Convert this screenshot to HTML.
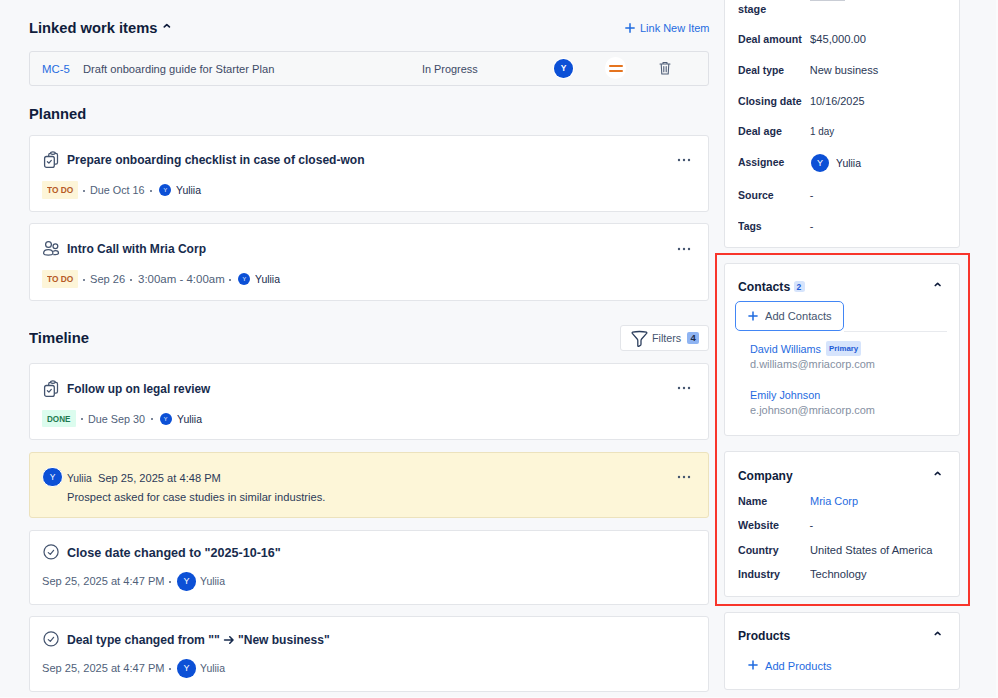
<!DOCTYPE html><html><head><meta charset="utf-8"><style>
*{margin:0;padding:0;box-sizing:border-box}
html,body{width:998px;height:698px;overflow:hidden;background:#f7f8fa}
body{position:relative;font-family:"Liberation Sans",sans-serif}
.t{position:absolute;line-height:1;white-space:nowrap;transform-origin:0 0}
.a{position:absolute}
</style></head><body><!-- left column boxes -->
<svg class="a" style="left:156px;top:16px" width="24" height="20" viewBox="0 0 24 20"><path d="M8.3 10.9 L10.8 8.7 L13.4 10.9" fill="none" stroke="#101d3c" stroke-width="1.7" stroke-linecap="round" stroke-linejoin="round"/></svg>
<svg class="a" style="left:624px;top:22px" width="12" height="12" viewBox="0 0 12 12"><path d="M6 1.3 V10.7 M1.3 6 H10.7" stroke="#1f6be0" stroke-width="1.5"/></svg>
<div class="a" style="left:29px;top:51px;width:680px;height:35px;border:1px solid #dfe1e6;border-radius:3px;background:#f7f8f9"></div>
<div class="a" style="left:554.2px;top:59.1px;width:18.6px;height:18.6px;border-radius:50%;background:#0c50d6;box-shadow:0 0 0 1px #fff;color:#fff;font-size:8.5px;font-weight:700;line-height:18.6px;text-align:center">Y</div>
<div class="a" style="left:604.8px;top:57.4px;width:21.6px;height:21.6px;border-radius:50%;background:#fff"></div>
<div class="a" style="left:609px;top:64.8px;width:14px;height:2px;background:#e5741f;border-radius:1px"></div>
<div class="a" style="left:609px;top:69.9px;width:14px;height:2px;background:#e5741f;border-radius:1px"></div>
<svg class="a" style="left:657px;top:60px" width="16" height="16" viewBox="0 0 16 16"><path d="M3 4 H13 M6 4 V2.5 H10 V4 M4.2 4 L4.8 14 H11.2 L11.8 4 M6.8 6.5 V11.8 M9.2 6.5 V11.8" fill="none" stroke="#505f79" stroke-width="1.1" stroke-linejoin="round" stroke-linecap="round"/></svg>

<!-- card1 -->
<div class="a" style="left:29px;top:135px;width:680px;height:77px;border:1px solid #e3e5e9;border-radius:3px;background:#fff"></div>
<svg class="a" style="left:36px;top:145px" width="30" height="30" viewBox="0 0 30 30"><path d="M12.7 11.3 V10 Q12.7 8.4 14.3 8.4 H19.9 Q21.5 8.4 21.5 10 V17.6 Q21.5 19.2 19.9 19.2 H18.4" fill="none" stroke="#44546f" stroke-width="1.25"/><ellipse cx="16.9" cy="8.1" rx="2.3" ry="1.3" fill="#fff" stroke="#44546f" stroke-width="1.2"/><rect x="8.6" y="11.5" width="9.7" height="10.8" rx="1.9" fill="#fff" stroke="#44546f" stroke-width="1.3"/><path d="M11.4 16.7 L12.9 18.1 L15.3 15.4" fill="none" stroke="#44546f" stroke-width="1.25" stroke-linecap="round" stroke-linejoin="round"/></svg>
<svg class="a" style="left:676px;top:157px" width="16" height="6" viewBox="0 0 16 6"><circle cx="3" cy="3" r="1.2" fill="#44546f"/><circle cx="8" cy="3" r="1.2" fill="#44546f"/><circle cx="13" cy="3" r="1.2" fill="#44546f"/></svg>
<div class="a" style="left:42px;top:181px;width:36px;height:17.6px;background:#fdf5d8;border-radius:1px"></div>
<div class="a" style="left:159.4px;top:183.5px;width:12px;height:12px;border-radius:50%;background:#0c50d6;color:#fff;font-size:5.5px;line-height:12px;text-align:center">Y</div>

<!-- card2 -->
<div class="a" style="left:29px;top:223px;width:680px;height:78px;border:1px solid #e3e5e9;border-radius:3px;background:#fff"></div>
<svg class="a" style="left:36px;top:234px" width="30" height="30" viewBox="0 0 30 30"><circle cx="12.5" cy="10.5" r="2.9" fill="none" stroke="#44546f" stroke-width="1.25"/><circle cx="19.4" cy="12.3" r="2.4" fill="none" stroke="#44546f" stroke-width="1.25"/><path d="M7.6 19.3 Q7.6 15.5 12.3 15.5 Q16.9 15.5 16.9 19.3 Q16.9 21.1 12.3 21.1 Q7.6 21.1 7.6 19.3 Z" fill="none" stroke="#44546f" stroke-width="1.25"/><path d="M17.2 17.4 Q18.2 16.6 19.6 16.6 Q22.5 16.6 22.5 19 Q22.5 20.5 19.6 20.5 H17.3" fill="none" stroke="#44546f" stroke-width="1.25"/></svg>
<svg class="a" style="left:676px;top:246px" width="16" height="6" viewBox="0 0 16 6"><circle cx="3" cy="3" r="1.2" fill="#44546f"/><circle cx="8" cy="3" r="1.2" fill="#44546f"/><circle cx="13" cy="3" r="1.2" fill="#44546f"/></svg>
<div class="a" style="left:41.6px;top:270px;width:36.6px;height:18px;background:#fdf5d8;border-radius:1px"></div>
<div class="a" style="left:238.3px;top:272.8px;width:12px;height:12px;border-radius:50%;background:#0c50d6;color:#fff;font-size:5.5px;line-height:12px;text-align:center">Y</div>

<!-- filters -->
<div class="a" style="left:620px;top:325px;width:89px;height:26px;border:1px solid #e3e5e9;border-radius:3px;background:#fff"></div>
<svg class="a" style="left:629.5px;top:329.5px" width="19" height="18" viewBox="0 0 19 18"><path d="M2.5 2.2 Q9.5 0.8 16.5 2.2 Q17.2 2.6 16.6 3.4 L11.6 9 Q11 9.7 11 10.8 V14.3 Q11 15.2 10 15.6 L8.6 16.3 Q7.8 16.6 7.8 15.6 V10.8 Q7.8 9.7 7.2 9 L2.3 3.4 Q1.8 2.6 2.5 2.2 Z" fill="none" stroke="#2c3e5d" stroke-width="1.3" stroke-linejoin="round"/></svg>
<div class="a" style="left:687.2px;top:332px;width:11.6px;height:12px;background:#8fb4f2;border-radius:2px"></div>

<!-- card3 -->
<div class="a" style="left:29px;top:363px;width:680px;height:77px;border:1px solid #e3e5e9;border-radius:3px;background:#fff"></div>
<svg class="a" style="left:36px;top:374px" width="30" height="30" viewBox="0 0 30 30"><path d="M12.7 11.3 V10 Q12.7 8.4 14.3 8.4 H19.9 Q21.5 8.4 21.5 10 V17.6 Q21.5 19.2 19.9 19.2 H18.4" fill="none" stroke="#44546f" stroke-width="1.25"/><ellipse cx="16.9" cy="8.1" rx="2.3" ry="1.3" fill="#fff" stroke="#44546f" stroke-width="1.2"/><rect x="8.6" y="11.5" width="9.7" height="10.8" rx="1.9" fill="#fff" stroke="#44546f" stroke-width="1.3"/><path d="M11.4 16.7 L12.9 18.1 L15.3 15.4" fill="none" stroke="#44546f" stroke-width="1.25" stroke-linecap="round" stroke-linejoin="round"/></svg>
<svg class="a" style="left:676px;top:385px" width="16" height="6" viewBox="0 0 16 6"><circle cx="3" cy="3" r="1.2" fill="#44546f"/><circle cx="8" cy="3" r="1.2" fill="#44546f"/><circle cx="13" cy="3" r="1.2" fill="#44546f"/></svg>
<div class="a" style="left:41.6px;top:409.6px;width:34.1px;height:17px;background:#dcfcee;border-radius:1px"></div>
<div class="a" style="left:159.7px;top:412.5px;width:12px;height:12px;border-radius:50%;background:#0c50d6;color:#fff;font-size:5.5px;line-height:12px;text-align:center">Y</div>

<!-- note -->
<div class="a" style="left:29px;top:452px;width:680px;height:66px;border:1px solid #ece2bd;border-radius:3px;background:#fdf6d8"></div>
<div class="a" style="left:42.3px;top:466.8px;width:20.4px;height:20.4px;border-radius:50%;background:#0c50d6;border:1px solid #fff;color:#fff;font-size:8.5px;font-weight:400;line-height:18.4px;text-align:center">Y</div>
<svg class="a" style="left:676px;top:474px" width="16" height="6" viewBox="0 0 16 6"><circle cx="3" cy="3" r="1.2" fill="#44546f"/><circle cx="8" cy="3" r="1.2" fill="#44546f"/><circle cx="13" cy="3" r="1.2" fill="#44546f"/></svg>

<!-- card4 -->
<div class="a" style="left:29px;top:530px;width:680px;height:75px;border:1px solid #e3e5e9;border-radius:3px;background:#fff"></div>
<svg class="a" style="left:42px;top:544px" width="17" height="17" viewBox="0 0 17 17"><circle cx="9.05" cy="7.9" r="7.05" fill="none" stroke="#44546f" stroke-width="1.2"/><path d="M6.3 8.6 L8.3 10.4 L11.6 6.3" fill="none" stroke="#44546f" stroke-width="1.2" stroke-linecap="round" stroke-linejoin="round"/></svg>
<div class="a" style="left:177.3px;top:572px;width:18.5px;height:18.5px;border-radius:50%;background:#0c50d6;color:#fff;font-size:9px;font-weight:400;line-height:18.5px;text-align:center">Y</div>

<!-- card5 -->
<div class="a" style="left:29px;top:616px;width:680px;height:76px;border:1px solid #e3e5e9;border-radius:3px;background:#fff"></div>
<svg class="a" style="left:42px;top:631.4px" width="17" height="17" viewBox="0 0 17 17"><circle cx="9.05" cy="7.9" r="7.05" fill="none" stroke="#44546f" stroke-width="1.2"/><path d="M6.3 8.6 L8.3 10.4 L11.6 6.3" fill="none" stroke="#44546f" stroke-width="1.2" stroke-linecap="round" stroke-linejoin="round"/></svg>
<div class="a" style="left:177.3px;top:659px;width:18.5px;height:18.5px;border-radius:50%;background:#0c50d6;color:#fff;font-size:9px;font-weight:400;line-height:18.5px;text-align:center">Y</div>

<!-- right column -->
<div class="a" style="left:724px;top:-10px;width:236px;height:258px;border:1px solid #e3e5e9;border-radius:3px;background:#fff"></div>
<div class="a" style="left:810px;top:0px;width:35px;height:1px;background:#c9cdd5"></div>
<div class="a" style="left:810.7px;top:153.8px;width:18.5px;height:18.5px;border-radius:50%;background:#0c50d6;color:#fff;font-size:9px;font-weight:400;line-height:18.5px;text-align:center">Y</div>

<div class="a" style="left:715px;top:253px;width:254.5px;height:352.5px;border:2px solid #f8352b"></div>

<div class="a" style="left:724px;top:263px;width:236px;height:173px;border:1px solid #e3e5e9;border-radius:3px;background:#fff"></div>
<div class="a" style="left:793.7px;top:280.8px;width:11.3px;height:11.6px;background:#d6e4fc;border-radius:2.5px"></div>
<svg class="a" style="left:926px;top:274px" width="24" height="20" viewBox="0 0 24 20"><path d="M9.3 11.5 L11.65 9.3 L14 11.5" fill="none" stroke="#101d3c" stroke-width="1.7" stroke-linecap="round" stroke-linejoin="round"/></svg>
<div class="a" style="left:734.9px;top:301.3px;width:108.7px;height:29.3px;border:1.8px solid #4286f5;border-radius:5px;background:#fff"></div>
<svg class="a" style="left:746.8px;top:310px" width="12" height="12" viewBox="0 0 12 12"><path d="M6 1.4 V10.6 M1.4 6 H10.6" stroke="#1f6be0" stroke-width="1.5"/></svg>
<div class="a" style="left:843.6px;top:331px;width:103px;height:1px;background:#e8eaee"></div>
<div class="a" style="left:826px;top:341.1px;width:35.3px;height:14.5px;background:#d6e4fc;border-radius:2px"></div>

<div class="a" style="left:724px;top:451px;width:236px;height:146px;border:1px solid #e3e5e9;border-radius:3px;background:#fff"></div>
<svg class="a" style="left:926px;top:463px" width="24" height="20" viewBox="0 0 24 20"><path d="M9.3 11.5 L11.65 9.3 L14 11.5" fill="none" stroke="#101d3c" stroke-width="1.7" stroke-linecap="round" stroke-linejoin="round"/></svg>

<div class="a" style="left:724px;top:612px;width:236px;height:78px;border:1px solid #e3e5e9;border-radius:3px;background:#fff"></div>
<svg class="a" style="left:926px;top:623px" width="24" height="20" viewBox="0 0 24 20"><path d="M9.3 11.5 L11.65 9.3 L14 11.5" fill="none" stroke="#101d3c" stroke-width="1.7" stroke-linecap="round" stroke-linejoin="round"/></svg>
<svg class="a" style="left:747px;top:659px" width="12" height="12" viewBox="0 0 12 12"><path d="M6 1.4 V10.6 M1.4 6 H10.6" stroke="#1f6be0" stroke-width="1.5"/></svg>
<div class="a" style="left:996px;top:0;width:2px;height:698px;background:#fbfbfc"></div>
<div class="a" style="left:0;top:697px;width:998px;height:1px;background:#fbfbfc"></div>
<svg class="a" style="left:222px;top:634px" width="14" height="12" viewBox="0 0 14 12"><path d="M2.6 6 H11 M7.8 2.8 L11 6 L7.8 9.2" fill="none" stroke="#172b4d" stroke-width="1.6" stroke-linecap="round" stroke-linejoin="round"/></svg>
<div class="a" style="left:82.90px;top:189.60px;width:2.2px;height:2.2px;border-radius:50%;background:#505f79"></div><div class="a" style="left:150.20px;top:189.60px;width:2.2px;height:2.2px;border-radius:50%;background:#505f79"></div><div class="a" style="left:82.80px;top:278.80px;width:2.2px;height:2.2px;border-radius:50%;background:#505f79"></div><div class="a" style="left:130.30px;top:278.80px;width:2.2px;height:2.2px;border-radius:50%;background:#505f79"></div><div class="a" style="left:228.90px;top:278.80px;width:2.2px;height:2.2px;border-radius:50%;background:#505f79"></div><div class="a" style="left:80.80px;top:418.10px;width:2.2px;height:2.2px;border-radius:50%;background:#505f79"></div><div class="a" style="left:150.90px;top:418.10px;width:2.2px;height:2.2px;border-radius:50%;background:#505f79"></div><div class="a" style="left:169.20px;top:580.70px;width:2.2px;height:2.2px;border-radius:50%;background:#505f79"></div><div class="a" style="left:169.20px;top:667.80px;width:2.2px;height:2.2px;border-radius:50%;background:#505f79"></div><div class="t" style="left:29.00px;top:19.78px;font-size:15.5px;font-weight:700;color:#101d3c;transform:scaleX(0.9495)">Linked work items</div>
<div class="t" style="left:639.80px;top:22.99px;font-size:11px;font-weight:400;color:#1f6be0;transform:scaleX(0.9971)">Link New Item</div>
<div class="t" style="left:41.90px;top:63.99px;font-size:11px;font-weight:400;color:#1f6be0;transform:scaleX(1.0338)">MC-5</div>
<div class="t" style="left:83.00px;top:64.09px;font-size:11px;font-weight:400;color:#3d4a66;transform:scaleX(1.0129)">Draft onboarding guide for Starter Plan</div>
<div class="t" style="left:422.40px;top:64.09px;font-size:11px;font-weight:400;color:#3d4a66;transform:scaleX(0.9884)">In Progress</div>
<div class="t" style="left:29.10px;top:105.78px;font-size:15.5px;font-weight:700;color:#101d3c;transform:scaleX(0.9486)">Planned</div>
<div class="t" style="left:67.00px;top:154.24px;font-size:12px;font-weight:700;color:#172b4d;transform:scaleX(1.0025)">Prepare onboarding checklist in case of closed-won</div>
<div class="t" style="left:47.00px;top:185.60px;font-size:8.5px;font-weight:700;color:#b55a26;transform:scaleX(0.9826)">TO DO</div>
<div class="t" style="left:90.40px;top:185.29px;font-size:11px;font-weight:400;color:#505f79;transform:scaleX(0.9813)">Due Oct 16</div>
<div class="t" style="left:176.00px;top:185.29px;font-size:11px;font-weight:400;color:#172b4d;transform:scaleX(0.9507)">Yuliia</div>
<div class="t" style="left:67.00px;top:243.34px;font-size:12px;font-weight:700;color:#172b4d;transform:scaleX(1.0024)">Intro Call with Mria Corp</div>
<div class="t" style="left:47.00px;top:274.60px;font-size:8.5px;font-weight:700;color:#b55a26;transform:scaleX(0.9826)">TO DO</div>
<div class="t" style="left:90.00px;top:274.49px;font-size:11px;font-weight:400;color:#505f79;transform:scaleX(1.0093)">Sep 26</div>
<div class="t" style="left:137.60px;top:274.49px;font-size:11px;font-weight:400;color:#505f79;transform:scaleX(1.0426)">3:00am - 4:00am</div>
<div class="t" style="left:255.00px;top:274.49px;font-size:11px;font-weight:400;color:#172b4d;transform:scaleX(0.9507)">Yuliia</div>
<div class="t" style="left:29.00px;top:330.48px;font-size:15.5px;font-weight:700;color:#101d3c;transform:scaleX(0.9583)">Timeline</div>
<div class="t" style="left:651.70px;top:333.49px;font-size:11px;font-weight:400;color:#44546f;transform:scaleX(0.9749)">Filters</div>
<div class="t" style="left:690.50px;top:332.86px;font-size:9.5px;font-weight:700;color:#1b2a4a">4</div>
<div class="t" style="left:66.70px;top:382.64px;font-size:12px;font-weight:700;color:#172b4d;transform:scaleX(0.9858)">Follow up on legal review</div>
<div class="t" style="left:47.00px;top:414.90px;font-size:8.5px;font-weight:700;color:#1e7a50;transform:scaleX(0.9527)">DONE</div>
<div class="t" style="left:88.00px;top:413.99px;font-size:11px;font-weight:400;color:#505f79;transform:scaleX(0.9809)">Due Sep 30</div>
<div class="t" style="left:176.70px;top:413.99px;font-size:11px;font-weight:400;color:#172b4d;transform:scaleX(0.9507)">Yuliia</div>
<div class="t" style="left:66.90px;top:472.59px;font-size:11px;font-weight:400;color:#2c3a58;transform:scaleX(0.9393)">Yuliia</div>
<div class="t" style="left:98.40px;top:472.59px;font-size:11px;font-weight:400;color:#2c3a58;transform:scaleX(1.0090)">Sep 25, 2025 at 4:48 PM</div>
<div class="t" style="left:66.90px;top:492.39px;font-size:11px;font-weight:400;color:#2c3a58;transform:scaleX(1.0107)">Prospect asked for case studies in similar industries.</div>
<div class="t" style="left:66.70px;top:547.04px;font-size:12px;font-weight:700;color:#172b4d;transform:scaleX(1.0474)">Close date changed to "2025-10-16"</div>
<div class="t" style="left:42.00px;top:576.19px;font-size:11px;font-weight:400;color:#505f79;transform:scaleX(1.0065)">Sep 25, 2025 at 4:47 PM</div>
<div class="t" style="left:200.40px;top:576.19px;font-size:11px;font-weight:400;color:#505f79;transform:scaleX(0.9507)">Yuliia</div>
<div class="t" style="left:66.70px;top:634.24px;font-size:12px;font-weight:700;color:#172b4d;transform:scaleX(1.0136)">Deal type changed from ""</div>
<div class="t" style="left:238.20px;top:634.24px;font-size:12px;font-weight:700;color:#172b4d;transform:scaleX(1.0021)">"New business"</div>
<div class="t" style="left:42.00px;top:663.49px;font-size:11px;font-weight:400;color:#505f79;transform:scaleX(1.0065)">Sep 25, 2025 at 4:47 PM</div>
<div class="t" style="left:200.40px;top:663.49px;font-size:11px;font-weight:400;color:#505f79;transform:scaleX(0.9507)">Yuliia</div>
<div class="t" style="left:737.80px;top:3.69px;font-size:11px;font-weight:700;color:#1c2b4d;transform:scaleX(0.9809)">stage</div>
<div class="t" style="left:737.80px;top:34.49px;font-size:11px;font-weight:700;color:#1c2b4d;transform:scaleX(0.9649)">Deal amount</div>
<div class="t" style="left:809.70px;top:34.49px;font-size:11px;font-weight:400;color:#2a3856;transform:scaleX(1.0188)">$45,000.00</div>
<div class="t" style="left:737.80px;top:64.89px;font-size:11px;font-weight:700;color:#1c2b4d;transform:scaleX(0.9403)">Deal type</div>
<div class="t" style="left:809.70px;top:64.89px;font-size:11px;font-weight:400;color:#2a3856">New business</div>
<div class="t" style="left:737.80px;top:95.69px;font-size:11px;font-weight:700;color:#1c2b4d;transform:scaleX(0.9649)">Closing date</div>
<div class="t" style="left:809.70px;top:95.69px;font-size:11px;font-weight:400;color:#2a3856;transform:scaleX(0.9898)">10/16/2025</div>
<div class="t" style="left:737.80px;top:125.89px;font-size:11px;font-weight:700;color:#1c2b4d;transform:scaleX(0.9724)">Deal age</div>
<div class="t" style="left:809.70px;top:125.89px;font-size:11px;font-weight:400;color:#2a3856;transform:scaleX(0.8989)">1 day</div>
<div class="t" style="left:737.80px;top:156.89px;font-size:11px;font-weight:700;color:#1c2b4d;transform:scaleX(0.9464)">Assignee</div>
<div class="t" style="left:737.80px;top:190.19px;font-size:11px;font-weight:700;color:#1c2b4d;transform:scaleX(0.9572)">Source</div>
<div class="t" style="left:809.70px;top:190.19px;font-size:11px;font-weight:400;color:#2a3856">-</div>
<div class="t" style="left:737.80px;top:220.69px;font-size:11px;font-weight:700;color:#1c2b4d;transform:scaleX(0.9534)">Tags</div>
<div class="t" style="left:809.70px;top:220.69px;font-size:11px;font-weight:400;color:#2a3856">-</div>
<div class="t" style="left:835.60px;top:158.09px;font-size:11px;font-weight:400;color:#172b4d;transform:scaleX(0.9507)">Yuliia</div>
<div class="t" style="left:737.90px;top:280.54px;font-size:12px;font-weight:700;color:#101d3c;transform:scaleX(1.0167)">Contacts</div>
<div class="t" style="left:796.60px;top:282.60px;font-size:8.5px;font-weight:700;color:#1d5bd6">2</div>
<div class="t" style="left:765.40px;top:310.59px;font-size:11px;font-weight:400;color:#44546f;transform:scaleX(1.0084)">Add Contacts</div>
<div class="t" style="left:750.00px;top:343.99px;font-size:11px;font-weight:400;color:#1f6be0;transform:scaleX(0.9844)">David Williams</div>
<div class="t" style="left:829.00px;top:344.63px;font-size:8px;font-weight:700;color:#1d5bd6;transform:scaleX(0.9800)">Primary</div>
<div class="t" style="left:750.00px;top:358.99px;font-size:11px;font-weight:400;color:#8590a2;transform:scaleX(0.9963)">d.williams@mriacorp.com</div>
<div class="t" style="left:750.00px;top:389.59px;font-size:11px;font-weight:400;color:#1f6be0;transform:scaleX(0.9826)">Emily Johnson</div>
<div class="t" style="left:750.00px;top:404.59px;font-size:11px;font-weight:400;color:#8590a2;transform:scaleX(0.9960)">e.johnson@mriacorp.com</div>
<div class="t" style="left:737.90px;top:469.84px;font-size:12px;font-weight:700;color:#101d3c">Company</div>
<div class="t" style="left:737.90px;top:496.49px;font-size:11px;font-weight:700;color:#1c2b4d;transform:scaleX(0.9743)">Name</div>
<div class="t" style="left:809.50px;top:496.49px;font-size:11px;font-weight:400;color:#1f6be0;transform:scaleX(0.9959)">Mria Corp</div>
<div class="t" style="left:737.90px;top:520.49px;font-size:11px;font-weight:700;color:#1c2b4d;transform:scaleX(0.9766)">Website</div>
<div class="t" style="left:809.50px;top:520.49px;font-size:11px;font-weight:400;color:#2a3856">-</div>
<div class="t" style="left:737.90px;top:545.09px;font-size:11px;font-weight:700;color:#1c2b4d;transform:scaleX(0.9627)">Country</div>
<div class="t" style="left:809.50px;top:545.09px;font-size:11px;font-weight:400;color:#2a3856;transform:scaleX(1.0119)">United States of America</div>
<div class="t" style="left:737.90px;top:568.89px;font-size:11px;font-weight:700;color:#1c2b4d;transform:scaleX(0.9676)">Industry</div>
<div class="t" style="left:809.50px;top:568.89px;font-size:11px;font-weight:400;color:#2a3856;transform:scaleX(1.0152)">Technology</div>
<div class="t" style="left:737.90px;top:630.14px;font-size:12px;font-weight:700;color:#101d3c;transform:scaleX(1.0055)">Products</div>
<div class="t" style="left:765.20px;top:660.69px;font-size:11px;font-weight:400;color:#1f6be0;transform:scaleX(1.0084)">Add Products</div></body></html>
